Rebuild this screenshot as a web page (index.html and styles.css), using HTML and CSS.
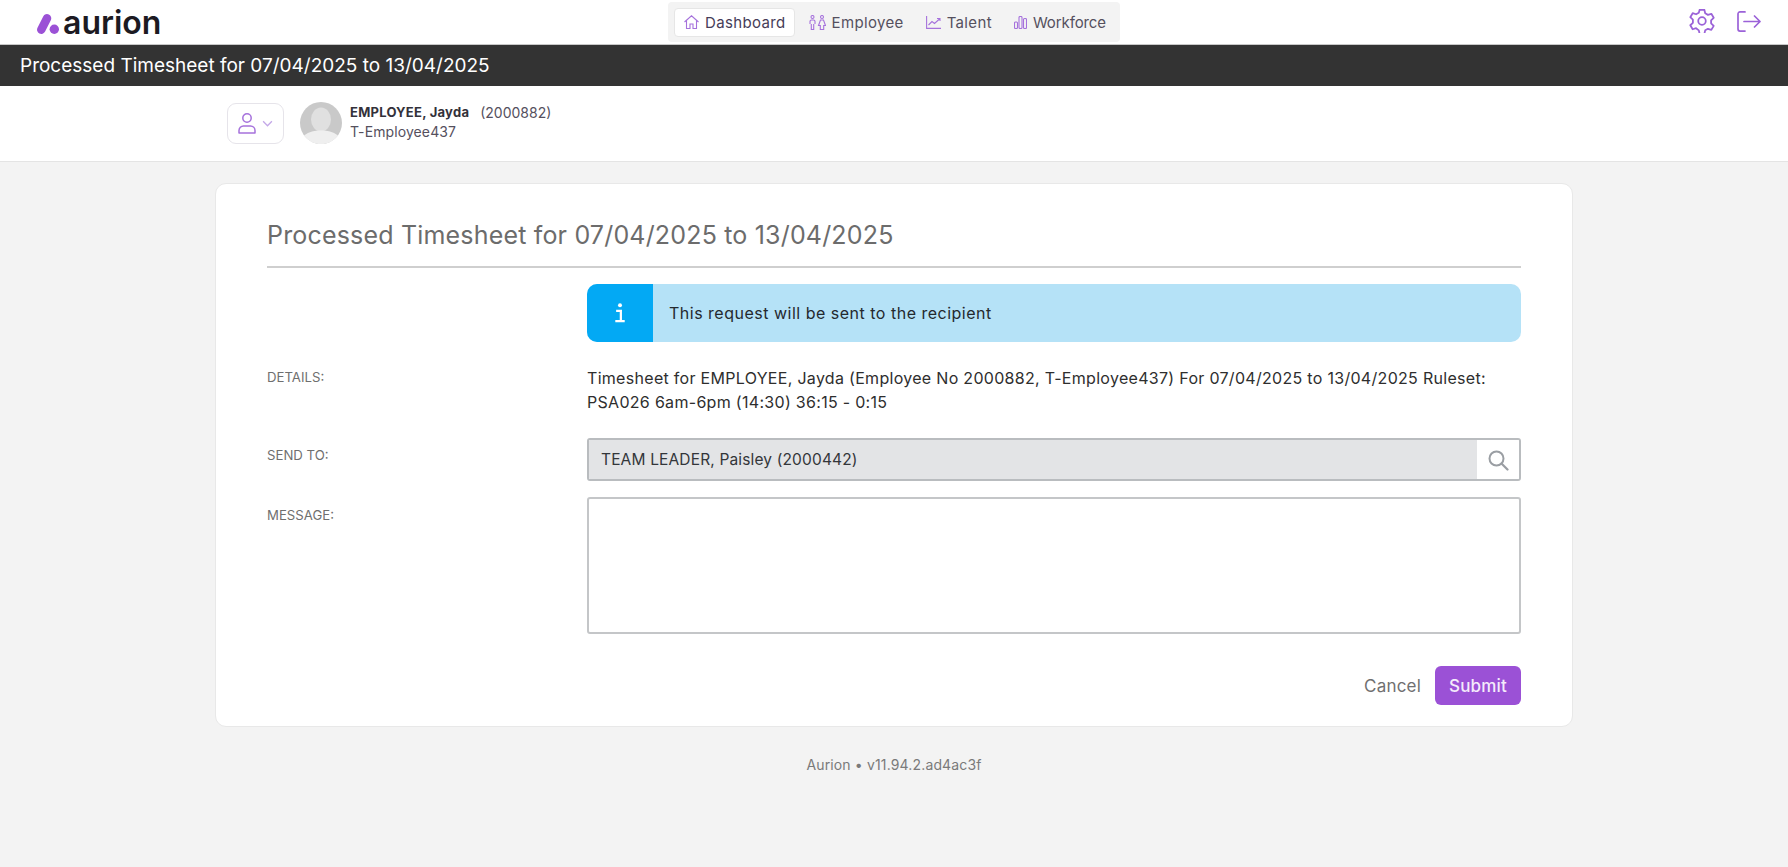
FILE: index.html
```html
<!DOCTYPE html>
<html lang="en">
<head>
<meta charset="utf-8">
<title>Processed Timesheet</title>
<link rel="stylesheet" href="styles.css">
</head>
<body>
<header class="topbar">
  <div class="logo">
    <svg class="logo-mark" viewBox="0 0 22 20"><path d="M10 4.300 L4.300 15.700" stroke="#9b51d6" stroke-width="8.500" stroke-linecap="round" fill="none"/><circle cx="17.300" cy="15.300" r="4.700" fill="#9b51d6"/></svg>
    <span class="logo-text">aurion</span>
  </div>
  <nav class="nav">
    <a class="nav-item active">
      <svg class="nav-icon icon-home" viewBox="0 0 15 14"><path d="M.5 7 7.500.8 14.500 7M2.500 5.500V13.500h3.500V9h3v4.500h3.500V5.500"/></svg>Dashboard</a>
    <a class="nav-item">
      <svg class="nav-icon icon-people" viewBox="0 0 17 15"><circle cx="3.500" cy="2" r="1.500"/><path d="M1 9V6.500A1.500 1.500 0 0 1 2.500 5h2A1.500 1.500 0 0 1 6 6.500V9M2.300 9v5.500h2.400V9"/><circle cx="13" cy="2" r="1.500"/><path d="M11.500 5h3l2 5.500h-1.800v4h-3.400v-4H9.500z"/></svg>Employee</a>
    <a class="nav-item">
      <svg class="nav-icon icon-chart" viewBox="0 0 15 13"><path d="M.6 0v12.400H15M2.500 9 6 5.500l2.500 2L13.500 3M11 2.500h3V5"/></svg>Talent</a>
    <a class="nav-item nav-item-tight">
      <svg class="nav-icon icon-bars" viewBox="0 0 13 13"><rect x=".5" y="6" width="3" height="6.500" rx="1"/><rect x="5" y=".5" width="3" height="12" rx="1"/><rect x="9.500" y="2.500" width="3" height="10" rx="1"/></svg>Workforce</a>
  </nav>
  <div class="top-actions">
    <svg class="top-icon icon-gear" viewBox="1 2 22 20"><circle cx="12" cy="12" r="3.200"/><path d="M10 2.500h4l.7 3 2.300 1.300 2.900-.9 2 3.400-2.200 2.100v2.600l2.200 2.100-2 3.400-2.900-.9-2.300 1.300-.7 3h-4l-.7-3L7 18.100l-2.900.9-2-3.400L4.300 13.500v-2.600L2.100 8.800l2-3.400 2.900.9 2.300-1.300z" stroke-linejoin="round"/></svg>
    <svg class="top-icon icon-exit" viewBox="0 0 24 21"><path d="M8 .9H3A2 2 0 0 0 1 2.900V18.100A2 2 0 0 0 3 20.100H8M7 10.500H23M17.500 5l5.500 5.500-5.500 5.500" stroke-linecap="round" stroke-linejoin="round"/></svg>
  </div>
</header>

<div class="titlebar">Processed Timesheet for 07/04/2025 to 13/04/2025</div>

<section class="person">
  <button class="person-btn" type="button">
    <svg class="person-icon" viewBox="0 0 18 21"><circle cx="9" cy="5" r="4.200"/><path d="M1 20v-2.500A4.500 4.500 0 0 1 5.500 13h7a4.500 4.500 0 0 1 4.500 4.500V20z" stroke-linejoin="round"/></svg>
    <svg class="chevron" viewBox="0 0 10 6"><path d="M1 1l4 4 4-4"/></svg>
  </button>
  <svg class="avatar" viewBox="0 0 42 42"><circle cx="21" cy="21" r="21" fill="#c9c9c9"/><ellipse cx="21" cy="17.500" rx="10" ry="12" fill="#e0e0e0"/><path d="M4 33.500c5-4 11-5 17-5s12 1 17 5a21 21 0 0 1-34 0z" fill="#efefef"/></svg>
  <div class="person-info">
    <div class="person-line"><strong class="person-name">EMPLOYEE, Jayda</strong><span class="person-no">(2000882)</span></div>
    <div class="person-code">T-Employee437</div>
  </div>
</section>

<main class="content">
  <section class="card">
    <h1 class="card-title">Processed Timesheet for 07/04/2025 to 13/04/2025</h1>
    <div class="form-row alert-row">
      <div class="label"></div>
      <div class="alert">
        <div class="alert-icon"><svg width="12" height="22" viewBox="0 0 14 24"><circle cx="7" cy="3" r="2.300" fill="#fff"/><path d="M2.500 9.500h5.500v11.500M1.500 21.500h11" stroke="#fff" stroke-width="2.600" fill="none"/></svg></div>
        <div class="alert-text">This request will be sent to the recipient</div>
      </div>
    </div>
    <div class="form-row details-row">
      <div class="label">DETAILS:</div>
      <div class="details">Timesheet for EMPLOYEE, Jayda (Employee No 2000882, T-Employee437) For 07/04/2025 to 13/04/2025 Ruleset: PSA026 6am-6pm (14:30) 36:15 - 0:15</div>
    </div>
    <div class="form-row send-row">
      <div class="label">SEND TO:</div>
      <div class="lookup">
        <div class="lookup-value">TEAM LEADER, Paisley (2000442)</div>
        <div class="lookup-btn"><svg width="22" height="22" viewBox="0 0 22 22"><circle cx="9.500" cy="9.500" r="7" fill="none" stroke="#9a9ea3" stroke-width="2"/><path d="M14.500 14.500 20.500 20.500" stroke="#9a9ea3" stroke-width="2.200" stroke-linecap="round"/></svg></div>
      </div>
    </div>
    <div class="form-row message-row">
      <div class="label">MESSAGE:</div>
      <div class="message"></div>
    </div>
    <div class="actions">
      <span class="cancel">Cancel</span>
      <button class="submit" type="button">Submit</button>
    </div>
  </section>
  <footer class="footer">Aurion • v11.94.2.ad4ac3f</footer>
</main>
</body>
</html>
```
FILE: styles.css
```css
* { box-sizing: border-box; }
html, body { margin: 0; height: 100%; }
body {
  background: #f3f3f3;
  font-family: "Inter", "Liberation Sans", sans-serif;
  color: #2b2b2b;
  height: 867px;
  overflow: hidden;
}
.topbar {
  height: 45px;
  background: #fff;
  display: grid;
  grid-template-columns: 1fr auto 1fr;
  align-items: start;
  border-bottom: 1px solid #c8c8c8;
}
.logo {
  display: flex;
  align-items: flex-start;
  gap: 4px;
  padding: 14px 0 0 37px;
  height: 44px;
}
.logo-mark { flex: none; width: 22px; height: 20px; }
.logo-text {
  font-size: 32px;
  font-weight: 600;
  line-height: 20px;
  margin-top: -1px;
  color: #1c1a22;
}
.nav {
  margin-top: 2px;
  height: 40px;
  background: #f3f3f3;
  border-radius: 4px;
  display: flex;
  align-items: center;
  padding: 0 6px;
  gap: 4px;
}
.nav-item {
  height: 29px;
  display: flex;
  align-items: center;
  gap: 6px;
  padding: 0 7px 0 9px;
  font-size: 15px;
  letter-spacing: .35px;
  color: #55505e;
  border: 1px solid transparent;
  border-radius: 4px;
}
.nav-item-tight { letter-spacing: -.1px; }
.nav-item.active {
  padding-right: 8px;
  background: #fff;
  border-color: #e6e6e6;
  color: #463c58;
}
.nav-icon {
  fill: none;
  stroke: #a672dc;
  stroke-width: 1.100;
}
.icon-home { width: 15px; height: 14px; }
.icon-people { width: 17px; height: 15px; }
.icon-chart { width: 15px; height: 13px; }
.icon-bars { width: 13px; height: 13px; }
.top-actions {
  display: flex;
  justify-content: flex-end;
  align-items: center;
  gap: 22px;
  padding: 9px 27px 0 0;
}
.top-icon {
  fill: none;
  stroke: #9b62d8;
}
.icon-gear { width: 26px; height: 24px; stroke-width: 1.500; }
.icon-exit { width: 24px; height: 21px; stroke-width: 1.700; }
.titlebar {
  height: 41px;
  background: #333;
  color: #fff;
  font-size: 19px;
  line-height: 41px;
  padding-left: 20px;
}
.person {
  height: 76px;
  background: #fff;
  border-bottom: 1px solid #e4e4e4;
  display: flex;
  align-items: center;
  padding: 0 0 1px 227px;
}
.person-btn {
  width: 57px;
  height: 41px;
  background: #fff;
  border: 1px solid #e6e4ea;
  border-radius: 9px;
  display: flex;
  align-items: center;
  justify-content: center;
  gap: 6px;
  padding: 0;
}
.person-icon {
  width: 18px;
  height: 21px;
  fill: none;
  stroke: #a672dc;
  stroke-width: 1.500;
}
.chevron {
  width: 11px;
  height: 7px;
  fill: none;
  stroke: #c4a8e8;
  stroke-width: 1.200;
}
.avatar {
  width: 42px;
  height: 42px;
  margin-left: 16px;
}
.person-info {
  margin: -2px 0 0 8px;
  font-size: 14px;
  line-height: 19px;
  color: #55505e;
}
.person-line { display: flex; gap: 11px; }
.person-name { color: #33313a; font-weight: 700; font-size: 13px; letter-spacing: .25px; }
.person-code { letter-spacing: .1px; }
.content {
  display: flex;
  flex-direction: column;
  align-items: center;
  padding-top: 21px;
}
.card {
  width: 1358px;
  height: 544px;
  background: #fff;
  border: 1px solid #e8e8e8;
  border-radius: 11px;
  padding: 33px 51px 0;
}
.card-title {
  margin: 0;
  height: 51px;
  border-bottom: 2px solid #cfcfcf;
  font-size: 25px;
  letter-spacing: .18px;
  font-weight: 400;
  line-height: 37px;
  color: #6c6c6c;
}
.form-row {
  display: grid;
  grid-template-columns: 320px 934px;
}
.alert-row { margin-top: 16px; }
.label {
  font-size: 13.200px;
  color: #6f6f6f;
}
.alert {
  height: 58px;
  display: flex;
  align-items: center;
  background: #b5e2f7;
  border-radius: 10px;
  overflow: hidden;
}
.alert-icon {
  width: 66px;
  height: 100%;
  background: #03a9f4;
  display: flex;
  align-items: center;
  justify-content: center;
}
.alert-text {
  padding-left: 16px;
  font-size: 16px;
  letter-spacing: .5px;
  color: #24292e;
}
.details-row { margin-top: 24px; }
.details-row .label { padding-top: 3px; }
.details {
  font-size: 16px;
  letter-spacing: .3px;
  line-height: 24px;
  color: #2e2e2e;
}
.send-row { margin-top: 24px; }
.send-row .label { padding-top: 9px; }
.lookup {
  height: 43px;
  display: flex;
  border: 2px solid #b9bcbf;
  border-radius: 3px;
  overflow: hidden;
}
.lookup-value {
  flex: 1;
  background: #e3e4e6;
  font-size: 15.500px;
  letter-spacing: .15px;
  line-height: 39px;
  padding-left: 12px;
  color: #33363a;
}
.lookup-btn {
  width: 42px;
  display: flex;
  align-items: center;
  justify-content: center;
  background: #fff;
}
.message-row { margin-top: 16px; }
.message-row .label { padding-top: 10px; }
.message {
  height: 137px;
  border: 2px solid #c4c6c8;
  border-radius: 3px;
}
.actions {
  margin-top: 32px;
  display: flex;
  justify-content: flex-end;
  align-items: center;
  gap: 14px;
}
.cancel { font-size: 17px; letter-spacing: .2px; color: #707070; }
.submit {
  width: 86px;
  height: 39px;
  background: #9b51d6;
  color: #f4ebfb;
  border: 0;
  border-radius: 6px;
  font: 500 17px "Inter", "Liberation Sans", sans-serif;
  letter-spacing: .2px;
}
.footer {
  margin-top: 29px;
  font-size: 14px;
  letter-spacing: .15px;
  color: #7a7a7a;
}
```
